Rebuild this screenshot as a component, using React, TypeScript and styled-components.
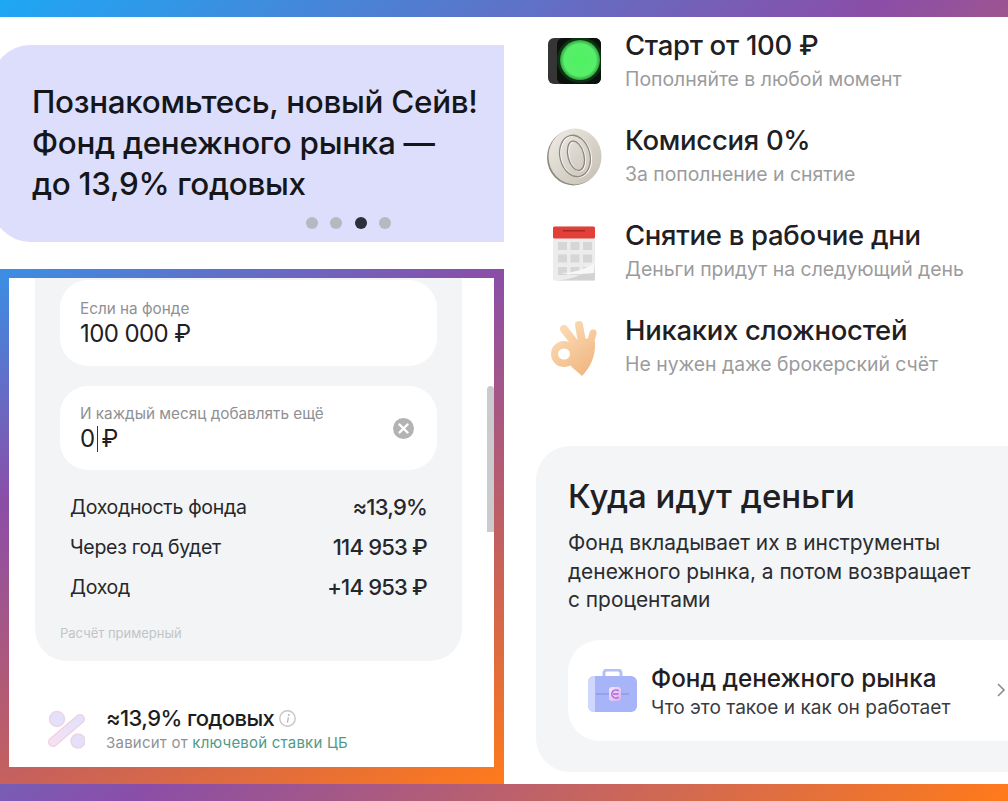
import styled, { createGlobalStyle } from "styled-components"

const GlobalStyle = createGlobalStyle`
  html, body {
    margin: 0;
    padding: 0;
    background: #fff;
  }
  body {
    font-family: "Inter", "Noto Sans", "Liberation Sans", sans-serif;
    color: #1f2023;
  }
  * {
    box-sizing: border-box;
  }
`

const Page = styled.div`
  width: 1008px;
  height: 801px;
  padding: 17px 0;
  overflow: hidden;
  display: grid;
  grid-template-columns: 504px 504px;
  background: linear-gradient(133deg, #1ea7f5 0%, #8a4ea8 50%, #ff7a1a 100%);
`

const LeftColumn = styled.div`
  display: flex;
  flex-direction: column;
  min-height: 0;
`

const Hero = styled.section`
  height: 252px;
  flex: none;
  background: #fff;
  padding-top: 28px;
  overflow: hidden;
`

const HeroCard = styled.div`
  height: 197px;
  margin-left: -8px;
  padding: 37px 0 0 40px;
  background: #dcdefb;
  border-radius: 38px 0 0 38px;
`

const HeroTitle = styled.h1`
  margin: 0;
  font-size: 31.4px;
  line-height: 41px;
  font-weight: 500;
  letter-spacing: -0.3px;
  color: #15161a;
`

const Dots = styled.div`
  display: flex;
  justify-content: flex-end;
  gap: 12.5px;
  margin: 12px 113px 0 0;
`

const Dot = styled.span<{ $active?: boolean }>`
  width: 12px;
  height: 12px;
  border-radius: 50%;
  background: ${(p) => (p.$active ? "#2d2f3a" : "#b6b8c2")};
`

const Frame = styled.section`
  flex: 1;
  min-height: 0;
  padding: 9px 10px 17px 9px;
  background: linear-gradient(155deg, #3a8fe6 0%, #8a4ea8 31%, #c4605e 68%, #ff7a1a 100%);
`

const Screen = styled.div`
  position: relative;
  height: 100%;
  background: #fff;
  padding: 0 32px 0 26px;
  overflow: hidden;
`

const Scrollbar = styled.div`
  position: absolute;
  right: 0;
  top: 108px;
  width: 7px;
  height: 146px;
  border-radius: 4px 4px 0 0;
  background: #cbcbcd;
`

const Panel = styled.div`
  height: 383px;
  padding: 2px 25px 0;
  background: #f3f4f6;
  border-radius: 0 0 32px 32px;
`

const InputBox = styled.div<{ $height: number }>`
  height: ${(p) => p.$height}px;
  display: flex;
  align-items: center;
  justify-content: space-between;
  padding: 0 23px 0 20px;
  border-radius: 28px;
  background: #fff;
  & + & {
    margin-top: 20px;
  }
`

const InputText = styled.div`
  padding-top: 2px;
`

const InputLabel = styled.div`
  font-size: 15.3px;
  line-height: 20px;
  color: #8f9094;
`

const InputValue = styled.div`
  display: flex;
  align-items: center;
  height: 30px;
  font-size: 24px;
  line-height: 30px;
  letter-spacing: -0.6px;
  color: #1f2023;
`

const Caret = styled.span`
  width: 1px;
  height: 26px;
  margin: 0 4px 0 2px;
  background: #333;
`

const ResultRows = styled.div`
  margin-top: 17px;
  padding: 0 10px;
`

const ResultRow = styled.div`
  display: flex;
  justify-content: space-between;
  align-items: center;
  height: 40px;
`

const ResultLabel = styled.span`
  font-size: 19.5px;
  letter-spacing: -0.3px;
  color: #26272b;
`

const ResultValue = styled.span`
  font-size: 22px;
  font-weight: 500;
  letter-spacing: -0.8px;
  color: #26272b;
`

const Footnote = styled.div`
  margin-top: 17px;
  font-size: 13px;
  line-height: 18px;
  color: #c2c4c8;
`

const RateRow = styled.div`
  display: flex;
  align-items: center;
  gap: 21px;
  margin: 44px 0 0 12px;
`

const RateTitleLine = styled.div`
  display: flex;
  align-items: center;
  gap: 5px;
  font-size: 22px;
  line-height: 26px;
  font-weight: 500;
  letter-spacing: -0.6px;
  color: #1c1d20;
`

const RateNote = styled.div`
  margin-top: 1px;
  font-size: 15px;
  line-height: 21px;
  letter-spacing: 0.22px;
  color: #8f9296;
`

const RateLink = styled.span`
  color: #4f9a88;
`

const RightColumn = styled.div`
  background: #fff;
  padding-top: 10px;
  overflow: hidden;
  min-height: 0;
`

const Feature = styled.div`
  display: flex;
  align-items: flex-start;
  gap: 24px;
  height: 95px;
  padding-left: 43px;
`

const FeatureIcon = styled.div<{ $offset: number }>`
  width: 54px;
  flex: none;
  display: flex;
  justify-content: center;
  padding-top: ${(p) => p.$offset}px;
`

const FeatureTitle = styled.div`
  font-size: 27.5px;
  line-height: 36px;
  font-weight: 500;
  letter-spacing: -0.3px;
  color: #1f2023;
`

const FeatureNote = styled.div`
  margin-top: 2px;
  font-size: 19.4px;
  line-height: 28px;
  color: #9b9b9d;
`

const MoneyCard = styled.div`
  width: 520px;
  height: 326px;
  margin: 39px 0 0 32px;
  padding: 28px 0 0 32px;
  background: #f3f5f7;
  border-radius: 34px;
`

const MoneyTitle = styled.h2`
  margin: 0;
  font-size: 33px;
  line-height: 44px;
  font-weight: 500;
  color: #1f2023;
`

const MoneyText = styled.p`
  margin: 11px 0 0;
  font-size: 20.9px;
  line-height: 28.5px;
  color: #2b2c30;
`

const FundLink = styled.div`
  display: flex;
  align-items: center;
  width: 472px;
  height: 101px;
  margin-top: 25px;
  padding: 0 34px 0 20px;
  background: #fff;
  border-radius: 32px;
`

const FundText = styled.div`
  margin-left: 14px;
  padding-top: 3px;
`

const FundTitle = styled.div`
  font-size: 24.25px;
  line-height: 30px;
  font-weight: 500;
  color: #1f2023;
`

const FundNote = styled.div`
  font-size: 19.1px;
  line-height: 26px;
  color: #3a3b3f;
`

const Chevron = styled.svg`
  margin-left: auto;
`

const TrafficIcon = () => (
  <svg width="53" height="46" viewBox="0 0 53 46">
    <defs>
      <radialGradient id="lamp">
        <stop offset="0" stopColor="#4df25f" />
        <stop offset="0.8" stopColor="#58ee6a" />
        <stop offset="1" stopColor="#2fa13d" />
      </radialGradient>
    </defs>
    <rect width="53" height="46" rx="6" fill="#353535" />
    <rect x="9" width="44" height="46" rx="6" fill="#0a120c" />
    <circle cx="32" cy="22" r="23" fill="#0f3d17" opacity="0.7" />
    <circle cx="32" cy="22" r="20" fill="url(#lamp)" />
  </svg>
)

const CoinIcon = () => (
  <svg width="55" height="58" viewBox="0 0 55 58" style={{ flex: "none" }}>
    <defs>
      <linearGradient id="coin" x1="0" y1="0" x2="1" y2="1">
        <stop offset="0" stopColor="#f0ede7" />
        <stop offset="1" stopColor="#c4bdb1" />
      </linearGradient>
    </defs>
    <ellipse cx="26.5" cy="29.5" rx="26.5" ry="28" fill="#8f8a80" />
    <ellipse cx="28" cy="28.5" rx="26.5" ry="28" fill="url(#coin)" />
    <g transform="rotate(-14 28 28)" fill="none">
      <ellipse cx="28.8" cy="28.6" rx="15" ry="21" stroke="#fbfaf7" strokeWidth="1.4" />
      <ellipse cx="28" cy="28" rx="15" ry="21" stroke="#8f8a80" strokeWidth="1.3" />
      <ellipse cx="29.8" cy="28.6" rx="8" ry="15" stroke="#fbfaf7" strokeWidth="1.4" />
      <ellipse cx="29" cy="28" rx="8" ry="15" stroke="#87827a" strokeWidth="1.3" />
    </g>
  </svg>
)

const CalendarIcon = () => (
  <svg width="43" height="55" viewBox="0 0 43 55">
    <rect width="42" height="54" y="0.5" rx="1.5" fill="#ececec" />
    <rect width="42" height="12" y="0.5" rx="1.5" fill="#e23f38" />
    <rect x="10" y="4" width="22" height="1.5" fill="#a82a25" />
    {[0, 1, 2].flatMap((row) =>
      [0, 1, 2].map((col) => (
        <rect key={`${row}-${col}`} x={5 + col * 12.5} y={16 + row * 12.5} width="9" height="8" fill="#d6d6d6" />
      ))
    )}
    <path d="M1 54.5 C16 54 32 50 42 37 V53 a1.5 1.5 0 0 1-1.5 1.5Z" fill="#d2d2d2" />
    <path d="M8 47 C22 47 36 42 42 36 L41 47 C28 48 18 49 8 47Z" fill="#f7f7f7" />
  </svg>
)

const OkHandIcon = () => (
  <svg width="48" height="58" viewBox="0 0 48 58">
    <defs>
      <linearGradient id="skin" gradientUnits="userSpaceOnUse" x1="4" y1="4" x2="44" y2="56">
        <stop offset="0" stopColor="#fcdfba" />
        <stop offset="1" stopColor="#f0b27b" />
      </linearGradient>
    </defs>
    <path d="M20 26 C26 18 40 16 45 22 C46 36 40 48 32 56 C26 50 18 46 17 38Z" fill="url(#skin)" />
    <g fill="none" stroke="url(#skin)" strokeLinecap="round">
      <path d="M14 9 L27 26" strokeWidth="8" />
      <path d="M29 5 L33 28" strokeWidth="8" />
      <path d="M43 13 L38 32" strokeWidth="7" />
      <circle cx="14" cy="34" r="9" strokeWidth="8" />
    </g>
    <ellipse cx="14" cy="34" rx="6" ry="5.5" fill="#fff" />
  </svg>
)

const PercentIcon = () => (
  <svg width="38" height="40" viewBox="0 0 38 40" style={{ flex: "none" }}>
    <defs>
      <linearGradient id="pct" x1="0" y1="1" x2="1" y2="0">
        <stop offset="0" stopColor="#f6e0f2" />
        <stop offset="1" stopColor="#e2e2fb" />
      </linearGradient>
    </defs>
    <path d="M6 33 L33 10" stroke="#efcfe4" strokeWidth="10" strokeLinecap="round" />
    <path d="M6 33 L33 10" stroke="url(#pct)" strokeWidth="7.5" strokeLinecap="round" />
    <circle cx="10" cy="10" r="7.5" fill="#e3e0fa" stroke="#f0d2e6" strokeWidth="1.5" />
    <circle cx="31" cy="32" r="7" fill="#e3e0fa" stroke="#f0d2e6" strokeWidth="1.5" />
  </svg>
)

const InfoIcon = () => (
  <svg width="17" height="17" viewBox="0 0 17 17">
    <circle cx="8.5" cy="8.5" r="7.7" fill="none" stroke="#c6c6c8" strokeWidth="1.4" />
    <path d="M9.4 7.4 L8.4 12.6" stroke="#b4b4b6" strokeWidth="1.3" />
    <circle cx="9.8" cy="5" r="0.9" fill="#b4b4b6" />
  </svg>
)

const ClearIcon = () => (
  <svg width="21" height="21" viewBox="0 0 21 21">
    <circle cx="10.5" cy="10.5" r="10.5" fill="#b3b3b3" />
    <path d="M6.5 6.5 L14.5 14.5 M14.5 6.5 L6.5 14.5" stroke="#fff" strokeWidth="2.4" strokeLinecap="round" />
  </svg>
)

const BriefcaseIcon = () => (
  <svg width="49" height="43" viewBox="0 0 49 43" style={{ flex: "none" }}>
    <defs>
      <linearGradient id="clasp" x1="0" y1="0" x2="1" y2="1">
        <stop offset="0" stopColor="#f6e8fc" />
        <stop offset="1" stopColor="#d4afee" />
      </linearGradient>
    </defs>
    <path d="M16 8 V4 a3 3 0 0 1 3-3 h11 a3 3 0 0 1 3 3 V8" fill="none" stroke="#b5c0f6" strokeWidth="3" />
    <rect y="7" width="49" height="36" rx="6" fill="#a7b5f8" />
    <path d="M0 13 a6 6 0 0 1 6-6 h1 V43 H6 a6 6 0 0 1-6-6Z" fill="#cfd8fc" />
    <path d="M8 25 H41" stroke="#7f8edb" strokeWidth="1" />
    <rect x="21" y="18" width="12" height="14" rx="3" fill="url(#clasp)" />
    <path d="M30.5 22 a4 4 0 1 0 0 6 M25 25 H30.5" fill="none" stroke="#b25fdc" strokeWidth="1.4" />
  </svg>
)

const features = [
  { title: "Старт от 100 ₽", note: "Пополняйте в любой момент", icon: <TrafficIcon />, offset: 11 },
  { title: "Комиссия 0%", note: "За пополнение и снятие", icon: <CoinIcon />, offset: 6 },
  { title: "Снятие в рабочие дни", note: "Деньги придут на следующий день", icon: <CalendarIcon />, offset: 9 },
  { title: "Никаких сложностей", note: "Не нужен даже брокерский счёт", icon: <OkHandIcon />, offset: 8 },
]

const results = [
  { label: "Доходность фонда", value: "≈13,9%" },
  { label: "Через год будет", value: "114 953 ₽" },
  { label: "Доход", value: "+14 953 ₽" },
]

export default function App() {
  return (
    <>
      <GlobalStyle />
      <Page>
        <LeftColumn>
          <Hero>
            <HeroCard>
              <HeroTitle>
                Познакомьтесь, новый Сейв!
                <br />
                Фонд денежного рынка —
                <br />
                до 13,9% годовых
              </HeroTitle>
              <Dots>
                <Dot />
                <Dot />
                <Dot $active />
                <Dot />
              </Dots>
            </HeroCard>
          </Hero>
          <Frame>
            <Screen>
              <Panel>
                <InputBox $height={86}>
                  <InputText>
                    <InputLabel>Если на фонде</InputLabel>
                    <InputValue>100 000 ₽</InputValue>
                  </InputText>
                </InputBox>
                <InputBox $height={84}>
                  <InputText>
                    <InputLabel>И каждый месяц добавлять ещё</InputLabel>
                    <InputValue>
                      0<Caret />₽
                    </InputValue>
                  </InputText>
                  <ClearIcon />
                </InputBox>
                <ResultRows>
                  {results.map((r) => (
                    <ResultRow key={r.label}>
                      <ResultLabel>{r.label}</ResultLabel>
                      <ResultValue>{r.value}</ResultValue>
                    </ResultRow>
                  ))}
                </ResultRows>
                <Footnote>Расчёт примерный</Footnote>
              </Panel>
              <RateRow>
                <PercentIcon />
                <div>
                  <RateTitleLine>
                    ≈13,9% годовых <InfoIcon />
                  </RateTitleLine>
                  <RateNote>
                    Зависит от <RateLink>ключевой ставки ЦБ</RateLink>
                  </RateNote>
                </div>
              </RateRow>
              <Scrollbar />
            </Screen>
          </Frame>
        </LeftColumn>
        <RightColumn>
          {features.map((f) => (
            <Feature key={f.title}>
              <FeatureIcon $offset={f.offset}>{f.icon}</FeatureIcon>
              <div>
                <FeatureTitle>{f.title}</FeatureTitle>
                <FeatureNote>{f.note}</FeatureNote>
              </div>
            </Feature>
          ))}
          <MoneyCard>
            <MoneyTitle>Куда идут деньги</MoneyTitle>
            <MoneyText>
              Фонд вкладывает их в инструменты
              <br />
              денежного рынка, а потом возвращает
              <br />с процентами
            </MoneyText>
            <FundLink>
              <BriefcaseIcon />
              <FundText>
                <FundTitle>Фонд денежного рынка</FundTitle>
                <FundNote>Что это такое и как он работает</FundNote>
              </FundText>
              <Chevron width="10" height="16" viewBox="0 0 10 16">
                <path d="M2 2 L8 8 L2 14" fill="none" stroke="#8c8c8e" strokeWidth="1.6" />
              </Chevron>
            </FundLink>
          </MoneyCard>
        </RightColumn>
      </Page>
    </>
  )
}
